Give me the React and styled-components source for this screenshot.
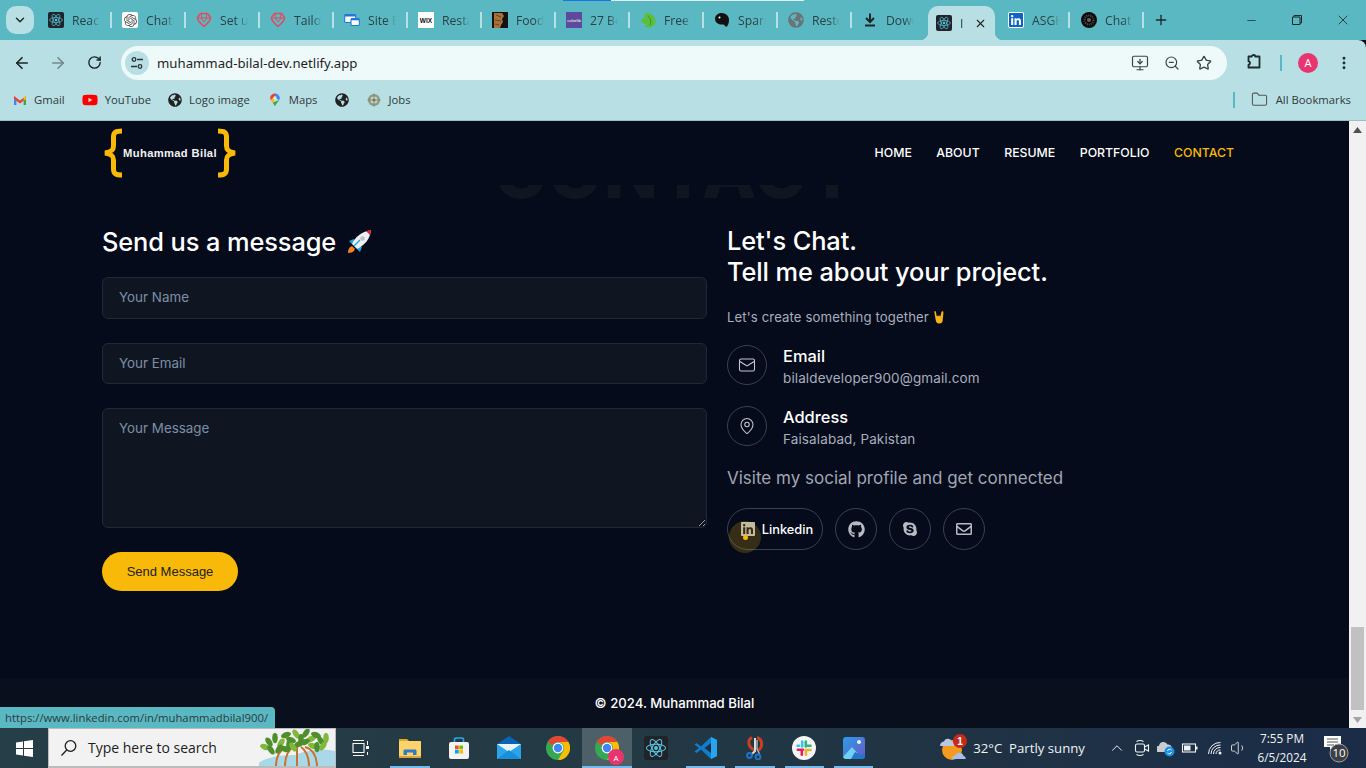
import React from "react";
import styled, { createGlobalStyle } from "styled-components";
import {
  ArrowLeft, ArrowRight, RotateCw, Star, ZoomOut, MonitorDown, MoreVertical, ChevronDown, ChevronUp,
  X, Plus, Minus, Folder, Mail, MapPin, Volume1,
} from "lucide-react";
import { FaLinkedin, FaGithub, FaSkype, FaRegEnvelope, FaYoutube, FaGlobeAmericas } from "react-icons/fa";
import { SiOpenai } from "react-icons/si";

const Global = createGlobalStyle`
  html, body { margin: 0; padding: 0; background: #050b1b; overflow: hidden; }
  * { box-sizing: border-box; }
`;

const uiFont = `"Open Sans", "Noto Sans", sans-serif`;
const webFont = `Inter, "Noto Sans", sans-serif`;

const Screen = styled.div`
  position: relative; width: 1366px; height: 768px; overflow: hidden;
  display: flex; flex-direction: column; font-family: ${uiFont};
`;

/* ---------- tab strip ---------- */
const TabStrip = styled.div`
  height: 40px; flex: none; background: #5ab8c2; display: flex; align-items: center; padding-left: 6px; position: relative;
`;
const LoadBar = styled.div`
  position: absolute; top: 0; left: 563px; width: 241px; height: 1px;
  background: linear-gradient(90deg, #1a73e8 0 20%, #dfeff1 20% 100%);
`;
const TabMenu = styled.div`
  width: 28px; height: 28px; border-radius: 10px; background: #b8e0e4; color: #1f2a2c;
  display: flex; align-items: center; justify-content: center; margin-right: 4px; flex: none;
`;
const Tab = styled.div`
  width: ${p => p.$w || 74}px; height: 40px; flex: none; display: flex; align-items: center; position: relative;
  padding-left: ${p => p.$pad || 10}px; gap: ${p => p.$gap || 8}px;
  &::after {
    content: ""; display: ${p => (p.$nosep ? "none" : "block")};
    position: absolute; right: 0; top: 12px; width: 2px; height: 16px; background: #b8e0e4;
  }
`;
const ActiveTab = styled.div`
  width: 67px; height: 34px; margin: 6px 2px 0 2px; flex: none; align-self: flex-start; background: #b8e0e4;
  border-radius: 10px 10px 0 0; display: flex; align-items: center; padding-left: 8px; gap: 8px; color: #222; position: relative;
  &::before, &::after { content: ""; position: absolute; bottom: 0; width: 8px; height: 8px; }
  &::before { left: -8px; background: radial-gradient(circle at 0 0, transparent 8px, #b8e0e4 8.5px); }
  &::after { right: -8px; background: radial-gradient(circle at 100% 0, transparent 8px, #b8e0e4 8.5px); }
`;
const TabLabel = styled.span`
  font-size: 12.2px; color: #2c3f44; width: ${p => p.$w || 28}px; overflow: hidden; white-space: nowrap; display: block;
  -webkit-mask-image: linear-gradient(90deg, #000 65%, transparent 100%);
  mask-image: linear-gradient(90deg, #000 65%, transparent 100%);
`;
const NewTab = styled.div`
  width: 30px; display: flex; justify-content: center; margin-left: 2px; color: #1d2a2c;
`;
const WindowControls = styled.div`
  margin-left: auto; display: flex; align-items: center; color: #1c2628; padding-right: 0;
`;
const WinBtn = styled.div`
  width: 46px; height: 40px; display: flex; align-items: center; justify-content: center;
`;

/* ---------- toolbar ---------- */
const Toolbar = styled.div`
  height: 45px; flex: none; background: #b8e0e4; display: flex; align-items: center; border-top-right-radius: 8px;
  padding: 0 0 0 4px;
`;
const NavIcon = styled.div`
  width: 36px; height: 34px; display: flex; align-items: center; justify-content: center;
  color: ${p => p.$muted ? "#76888c" : "#1a2426"}; flex: none;
`;
const Omnibox = styled.div`
  width: 1106px; height: 34px; margin-left: 9px; border-radius: 17px; background: #eef9f9; display: flex; align-items: center;
  padding: 0 7px 0 4px; flex: none;
`;
const SiteChip = styled.div`
  width: 24px; height: 24px; border-radius: 50%; background: #b8e0e4; display: flex; align-items: center; justify-content: center; flex: none;
`;
const Url = styled.span`
  margin-left: 8px; font-size: 13.2px; color: #1f1f1f; font-family: "Noto Sans", sans-serif; flex: 1;
`;
const OmniIcon = styled.div`
  width: 32px; display: flex; justify-content: center; color: #3a4447;
`;
const ToolbarEnd = styled.div`
  display: flex; align-items: center; margin-left: 11px; flex: 1;
`;
const ToolbarIcon = styled.div`
  width: ${p => p.$w || 32}px; display: flex; justify-content: center; color: #1f2a2c; flex: none;
`;
const VSep = styled.div`
  width: 2px; height: 16px; background: #5ab8c2; flex: none; margin: ${p => p.$m || "0"};
`;
const Avatar = styled.div`
  width: 20px; height: 20px; border-radius: 50%; background: #e8356f; color: #fff; font-size: 11px;
  display: flex; align-items: center; justify-content: center; flex: none;
`;

/* ---------- bookmarks ---------- */
const BookmarkBar = styled.div`
  height: 36px; flex: none; background: #b8e0e4; border-bottom: 1px solid #9dbfc3; display: flex; align-items: center; padding: 0 15px 6px 13px;
`;
const Bookmark = styled.div`
  display: flex; align-items: center; gap: 7px; font-size: 11.3px; color: #30383a; margin-right: ${p => p.$mr ?? 17}px; white-space: nowrap;
`;
const BookmarkEnd = styled.div`
  margin-left: auto; display: flex; align-items: center; gap: 8px; font-size: 11.3px; color: #30383a;
`;

/* ---------- web page ---------- */
const Viewport = styled.div`
  flex: 1; min-height: 0; display: flex;
`;
const Page = styled.main`
  flex: 1; min-width: 0; background: #050b1b; overflow: hidden; display: flex; flex-direction: column; font-family: ${webFont};
`;
const Header = styled.header`
  height: 64px; flex: none; background: #050b1b; position: relative; z-index: 2;
  display: flex; align-items: center; justify-content: space-between; padding: 0 115px 0 104px;
`;
const Logo = styled.div`
  display: flex; align-items: center;
`;
const LogoName = styled.span`
  color: #f2f2f2; font-weight: 700; font-size: 11.2px; font-family: "Liberation Sans", sans-serif; white-space: nowrap; letter-spacing: .35px; width: 94px; text-align: center;
`;
const Nav = styled.nav`
  display: flex; gap: 24.5px; padding-bottom: 2px;
`;
const NavLink = styled.a`
  font-size: 12.3px; font-weight: 500; color: ${p => p.$active ? "#f9b908" : "#fff"}; text-transform: uppercase; white-space: nowrap;
`;
const Title = styled.div`
  margin-top: -43px; margin-left: 2px; height: 61px; line-height: 61px; flex: none; text-align: center; font-weight: 800; font-size: 71px; color: #10161f;
  white-space: nowrap; letter-spacing: 1px; overflow: hidden;
`;
const Columns = styled.div`
  display: grid; grid-template-columns: 605px 1fr; gap: 20px; padding: 21px 0 0 102px; flex: 1;
`;
const FormCol = styled.form`
  display: flex; flex-direction: column; margin: 0;
`;
const Heading = styled.h2`
  margin: 0; font-size: 25.4px; font-weight: 500; color: #fff; line-height: 31px; display: flex; align-items: center; gap: 10px; white-space: nowrap; letter-spacing: -.1px;
`;
const FormHeading = styled(Heading)`
  margin: 2px 0 20px;
`;
const fieldCss = `
  width: 100%; background: #0f1622; border: 1px solid #222936; border-radius: 6px; color: #fff;
  font-family: ${webFont}; font-size: 13.4px; padding: 0 16px; outline: none; display: block;
  &::placeholder { color: #7d8ea6; opacity: 1; }
`;
const Field = styled.input`
  ${fieldCss}
  height: ${p => p.$h}px; margin-bottom: ${p => p.$mb}px; padding-bottom: 2px;
`;
const Area = styled.textarea`
  ${fieldCss}
  height: 120px; padding-top: 11px; margin-bottom: 24px; color-scheme: dark;
`;
const SendBtn = styled.button`
  width: 136px; height: 39px; border: 0; border-radius: 20px; background: #f9b908; color: #222;
  font-family: "Liberation Sans", sans-serif; font-size: 13px;
`;
const InfoCol = styled.div`
  display: flex; flex-direction: column; padding-top: 1px;
`;
const Sub = styled.p`
  margin: 22px 0 0; font-size: 13.2px; color: #a8aebb; line-height: 16px; display: flex; align-items: center; gap: 3px; letter-spacing: .1px;
`;
const InfoRow = styled.div`
  display: flex; align-items: flex-start; gap: 16px; height: 40px; margin-top: ${p => p.$mt}px;
`;
const Ring = styled.div`
  width: 40px; height: 40px; border-radius: 50%; border: 1px solid #3a404c; display: flex; align-items: center; justify-content: center; color: #c3c7cf; flex: none;
`;
const InfoText = styled.div`
  display: flex; flex-direction: column;
`;
const InfoTitle = styled.div`
  font-size: 16.4px; font-weight: 500; color: #fff; line-height: 22px;
`;
const InfoValue = styled.div`
  font-size: 13.5px; color: #a8aebb; line-height: 22px; letter-spacing: .12px;
`;
const Visit = styled.div`
  margin-top: 20px; font-size: 17px; color: #a0a6b2; line-height: 24px; white-space: nowrap;
`;
const Socials = styled.div`
  display: flex; gap: 12px; margin-top: 18px; position: relative;
`;
const SocialPill = styled.a`
  height: 42px; width: ${p => p.$wide ? 96 : 42}px; border-radius: 21px; border: 1px solid #3a404c; display: flex; align-items: center; justify-content: center;
  gap: 6px; color: #b7bbc3; font-size: 12.8px; font-weight: 500; padding-left: ${p => p.$wide ? 3 : 0}px;
`;
const SocialText = styled.span`
  color: #fff;
`;
const Pointer = styled.div`
  position: absolute; left: 2px; top: 13px; width: 32px; height: 32px; border-radius: 50%;
  background: rgba(249,185,8,.2); display: flex; align-items: center; justify-content: center;
  &::after { content: ""; width: 5px; height: 5px; border-radius: 50%; background: #f9b908; }
`;
const Footer = styled.footer`
  height: 50px; flex: none; background: #0a0f1e; color: #fff; font-size: 13.2px; font-weight: 500;
  display: flex; align-items: center; justify-content: center;
`;
const Scrollbar = styled.div`
  width: 17px; flex: none; background: #f1f1f1; display: flex; flex-direction: column; align-items: center;
`;
const ScrollTrack = styled.div`
  flex: 1; width: 100%; padding: 0 2px 1px; display: flex; flex-direction: column; justify-content: flex-end;
`;
const ScrollThumb = styled.div`
  height: 83px; background: #c1c1c1;
`;
const Arrow = styled.div`
  height: 17px; width: 100%; flex: none; display: flex; align-items: center; justify-content: center;
`;
const StatusBubble = styled.div`
  position: absolute; left: 0; bottom: 40px; height: 21px; width: 275px; background: #5ab8c2; color: #2d3a3d;
  font-size: 11.3px; display: flex; align-items: center; padding-left: 5px; border-top-right-radius: 4px; white-space: nowrap;
`;

/* ---------- taskbar ---------- */
const Taskbar = styled.div`
  height: 40px; flex: none; display: flex; align-items: center; color: #f0f3f4;
  background: linear-gradient(90deg, #263e47 0%, #233943 45%, #1b2c47 100%);
`;
const StartBtn = styled.div`
  width: 48px; height: 40px; display: flex; align-items: center; justify-content: center; flex: none;
`;
const SearchBox = styled.div`
  width: 288px; height: 40px; background: #f2f2f2; border: 1px solid #bcbcbc; border-bottom-width: 2px; display: flex; align-items: center; padding-left: 11px;
  color: #1d1d1d; flex: none; overflow: hidden;
`;
const SearchText = styled.span`
  font-size: 14px; margin-left: 10px; flex: 1; white-space: nowrap;
`;
const TaskBtn = styled.div`
  width: 49.3px; height: 40px; flex: none; display: flex; align-items: center; justify-content: center; position: relative;
  background: ${p => p.$active ? "#4d6067" : "transparent"};
  &::after {
    content: ""; position: absolute; bottom: 0; height: 2px; background: #76b9ed;
    left: ${p => p.$active ? 0 : 5}px; right: ${p => p.$active ? 0 : 5}px; display: ${p => p.$run ? "block" : "none"};
  }
`;
const Weather = styled.div`
  margin-left: auto; display: flex; align-items: center; font-size: 13.2px; gap: 4px; width: 168px; flex: none; padding-left: 2px;
`;
const WeatherText = styled.span`
  white-space: nowrap;
`;
const TraySlot = styled.div`
  width: 24.3px; flex: none; display: flex; justify-content: center; align-items: center;
`;
const Clock = styled.div`
  width: 62px; flex: none; font-size: 11.8px; line-height: 19px; text-align: center;
`;
const Notify = styled.div`
  width: 53px; flex: none; display: flex; justify-content: flex-start; padding-left: 11px;
`;

/* ---------- drawn icons ---------- */
const S = ({ s = 16, v = "0 0 16 16", children, ...r }) => (
  <svg width={s} height={s} viewBox={v} style={{ flex: "none", display: "block" }} {...r}>{children}</svg>
);
const ReactLogo = ({ s = 16, bg = "#20232a" }) => (
  <S s={s}>
    <rect width="16" height="16" rx="2" fill={bg} />
    <g fill="none" stroke="#58c4dc" strokeWidth=".7">
      <ellipse cx="8" cy="8" rx="6.4" ry="2.5" />
      <ellipse cx="8" cy="8" rx="6.4" ry="2.5" transform="rotate(60 8 8)" />
      <ellipse cx="8" cy="8" rx="6.4" ry="2.5" transform="rotate(120 8 8)" />
    </g>
    <circle cx="8" cy="8" r="1.3" fill="#58c4dc" />
  </S>
);
const IconTile = styled.div`
  width: 16px; height: 16px; background: #fff; border-radius: 2px; display: flex; align-items: center; justify-content: center; flex: none;
`;
const GptIcon = () => (
  <IconTile><SiOpenai size={13} color="#555" /></IconTile>
);
const ShieldIcon = () => (
  <S>
    <path d="M4.5 1.5h7l3 4c.3 3-3.5 6.5-6.5 9-3-2.5-6.8-6-6.5-9z" fill="none" stroke="#e5485d" strokeWidth="1.4" strokeLinejoin="round" />
    <path d="M2 6h12M5 6l3 4 3-4M5 2l1 4M11 2l-1 4" fill="none" stroke="#e5485d" strokeWidth="1" />
  </S>
);
const SiteIcon = () => (
  <S>
    <rect x="0.7" y="2.5" width="11" height="8" rx="1" fill="#fff" stroke="#1f78d6" strokeWidth="1.1" />
    <rect x="0.7" y="2.5" width="11" height="2" fill="#1f78d6" />
    <rect x="7" y="6.5" width="8.3" height="7" rx="1" fill="#fff" stroke="#1f78d6" strokeWidth="1.1" />
    <rect x="7" y="6.5" width="8.3" height="1.8" fill="#1f78d6" />
  </S>
);
const WixIcon = () => (
  <S>
    <rect width="16" height="16" fill="#fff" />
    <text x="8" y="10.5" textAnchor="middle" fontSize="6.5" fontWeight="700" fontFamily="Liberation Sans" fill="#111">WIX</text>
  </S>
);
const FoodIcon = () => (
  <S>
    <rect width="16" height="16" fill="#15120f" />
    <path d="M2 1h8l2 3-2 3 1 3-2 3-1 3H2z" fill="#a8713a" />
    <path d="M4 3l5 2M3 8l6 1M3 12l4 1" stroke="#5e3b1c" strokeWidth=".8" />
  </S>
);
const ColorlibIcon = () => (
  <S>
    <rect width="16" height="16" fill="#5d4a9c" />
    <text x="8" y="9.8" textAnchor="middle" fontSize="4.3" fontFamily="Liberation Sans" fill="#fff">colorlib</text>
  </S>
);
const LeafIcon = () => (
  <S>
    <path d="M6 .5c5 .5 9.5 4 9.5 8.5 0 4-3 6.5-6.5 6.5-1.5 0-3-.5-4.5-1.5L7 12.5C4 12 1.5 10.5 .8 8 2 6.8 3.5 6.3 5 6.5 4 4.5 4.5 2.5 6 .5z" fill="#5cbf3b" />
    <path d="M8 4c2.5 2 3.5 5.5 2 9" stroke="#3d9228" fill="none" />
  </S>
);
const SparkIcon = () => (
  <S>
    <path d="M7.5 1C12 1 15 4 15 8c0 3-1 6-3 7-1-1-1.5-2-2.5-2.5C5 13 1 11 1 6.5 1 3.5 4 1 7.5 1z" fill="#111" />
    <circle cx="5.5" cy="5.5" r="1" fill="#fff" />
  </S>
);
const DownloadIcon = () => (
  <S>
    <path d="M8 1.5v8M4 6l4 4 4-4" fill="none" stroke="#1c2628" strokeWidth="2" />
    <path d="M3 13.5h10" stroke="#1c2628" strokeWidth="2" />
  </S>
);
const DotBall = () => (
  <S>
    <circle cx="8" cy="8" r="8" fill="#0a0a0a" />
    <circle cx="8" cy="8" r="4.5" fill="none" stroke="#555" strokeWidth="2" strokeDasharray="1 1" />
    <circle cx="8" cy="8" r="2" fill="#666" />
  </S>
);
const TuneIcon = () => (
  <S s={14} v="0 0 14 14">
    <g fill="none" stroke="#2a3436" strokeWidth="1.3">
      <circle cx="4" cy="3.5" r="1.8" />
      <path d="M7 3.5h6M1 10.5h6" />
      <circle cx="10" cy="10.5" r="1.8" />
    </g>
  </S>
);
const PuzzleIcon = () => (
  <S s={18} v="0 0 18 18">
    <path d="M3.5 2.5h3.3c0-2 3.4-2 3.4 0h4.3v11h-11v-2.8c2 0 2-3.4 0-3.4z" fill="none" stroke="#1f2a2c" strokeWidth="1.8" strokeLinejoin="round" />
  </S>
);
const RestoreIcon = () => (
  <S s={12} v="0 0 12 12">
    <path d="M3 3V1.5h7.5V9H9M1.5 3h7.5v7.5H1.5z" fill="none" stroke="#1c2628" strokeWidth="1" />
  </S>
);
const GmailIcon = () => (
  <S s={14} v="0 0 14 14">
    <path d="M1 3v9h2.4V6z" fill="#4285f4" />
    <path d="M13 3v9h-2.4V6z" fill="#34a853" />
    <path d="M1 3l6 4.5L13 3v-.5 3.5L7 10.5 1 6z" fill="#ea4335" />
    <path d="M10.6 4.8L13 3v3l-2.4 1.8z" fill="#fbbc04" />
  </S>
);
const MapsPin = () => (
  <S s={14} v="0 0 14 16">
    <path d="M7 .5C3.8.5 1.5 3 1.5 5.7c0 1 .3 1.8.7 2.5L7 3.8z" fill="#ea4335" />
    <path d="M7 .5c1.6 0 3 .6 4 1.7L7 6z" fill="#4285f4" />
    <path d="M11 2.2c1 1 1.5 2.2 1.5 3.5 0 .8-.2 1.6-.6 2.3L7 6z" fill="#4285f4" />
    <path d="M2.2 8.2L7 3.8v4.6L4.2 11z" fill="#fbbc04" />
    <path d="M4.2 11l7.7-3C10.5 10.5 8 12 7 15.5 6.5 13.5 5.3 12.3 4.2 11z" fill="#34a853" />
    <circle cx="7" cy="5.7" r="1.9" fill="#fff" opacity=".75" />
  </S>
);
const JobsIcon = () => (
  <S s={14}>
    <circle cx="8" cy="8" r="7" fill="#8f9c87" />
    <circle cx="8" cy="8" r="4" fill="#cdd6c4" />
    <path d="M8 .5v15M.5 8h15" stroke="#75816d" strokeWidth=".9" />
    <circle cx="8" cy="8" r="1.8" fill="#6d7a66" />
  </S>
);
const BraceSvg = ({ flip }) => (
  <S s={50} v="0 0 19 50" width="19" height="50" style={{ transform: flip ? "scaleX(-1)" : "none", flex: "none" }}>
    <path d="M18 3C12 3 9.5 4 9.5 9V18C9.5 22 7.5 24 1 25C7.5 26 9.5 28 9.5 32V41C9.5 46 12 47 18 47"
      fill="none" stroke="#f9b908" strokeWidth="5" strokeLinecap="butt" strokeLinejoin="miter" />
  </S>
);
const Rocket = () => (
  <S s={26} v="0 0 26 26">
    <path d="M2 24c0-3 1-6 4-7l3 3c-1 3-4 4-7 4z" fill="#f5811f" />
    <path d="M8 10l-5 2 3 3 3-2zM16 18l-2 5-3-3 2-3z" fill="#1fa2dc" />
    <path d="M6 15C9 8 15 3 25 1c-1 9-6 15-14 19z" fill="#eef1f4" />
    <path d="M20 1.9L25 1c-.2 2-.5 3.5-1 5z" fill="#d8222c" />
    <circle cx="16.5" cy="9.5" r="2.3" fill="#b9c0c6" />
    <path d="M8 17l6-6" stroke="#1fa2dc" strokeWidth="1.2" />
  </S>
);
const RockHand = () => (
  <S s={14} v="0 0 12 14">
    <path d="M2 1c1 0 1 1 1.3 3l.3 2h4l.6-3C8.4 1.5 9 1 9.8 1.3c.7.3.7 1.4.5 3L9.8 9c0 3-1 4.5-3.5 4.5S3 12 2.6 9.5L1.5 3C1.3 2 1.4 1 2 1z" fill="#f6b21b" />
    <path d="M4 6h3.8" stroke="#b87d0c" strokeWidth=".8" />
  </S>
);
const WinLogo = () => (
  <S s={17} v="0 0 17 17">
    <path d="M0 2.4l7-1v6.6H0zM8 1.3L17 0v8H8zM0 9h7v6.6l-7-1zM8 9h9v8l-9-1.3z" fill="#fff" />
  </S>
);
const SearchGlass = () => (
  <S s={18} v="0 0 18 18">
    <circle cx="10.5" cy="7" r="5.3" fill="none" stroke="#1d1d1d" strokeWidth="1.3" />
    <path d="M6.7 11L1.5 16.5" stroke="#1d1d1d" strokeWidth="1.3" />
  </S>
);
const leaves = [[6,18],[10,13],[16,9],[22,14],[27,6],[32,11],[37,5],[42,10],[47,4],[52,10],[57,6],[62,12],[67,9],[20,20],[40,15],[54,17],[12,21],[30,16],[64,17],[46,13],[26,20],[34,18],[58,18]];
const Mangrove = () => (
  <S s={76} v="0 0 76 38" width="76" height="38" style={{ flex: "none", display: "block" }}>
    <path d="M-4 38a40 14 0 0 1 40-12c14-6 30-6 40-4v16z" fill="#a9d8e8" />
    <g fill="none" stroke="#c9702a" strokeWidth="2">
      <path d="M30 18C20 20 17 28 17 38M34 18c-6 4-8 12-8 20M38 18v20M42 18c6 4 8 12 8 20M46 18c8 2 12 10 12 20" />
    </g>
    <g>
      {leaves.map(([x, y], i) => (
        <ellipse key={i} cx={x} cy={y} rx="2.8" ry="5.2" transform={`rotate(${(i % 5) * 35 - 70} ${x} ${y})`} fill={i % 3 === 0 ? "#80b83e" : "#4e8e2b"} />
      ))}
    </g>
  </S>
);
const TaskView = () => (
  <S s={18} v="0 0 18 18">
    <path d="M1 1.5h11M1 16.5h11M1 4.5h11v9H1z" fill="none" stroke="#fff" strokeWidth="1.1" />
    <path d="M15.5 2v4M15.5 13v3" stroke="#fff" strokeWidth="1" fill="none" />
    <rect x="14" y="7" width="3" height="3" fill="#fff" />
  </S>
);
const FolderIcon = () => (
  <S s={24} v="0 0 24 24">
    <path d="M1 3h8l2 2h12v3H1z" fill="#e3a72b" />
    <rect x="1" y="5" width="22" height="17" rx="1" fill="#fbd36a" />
    <path d="M5.5 19v-4c0-1 .5-1.5 1.5-1.5h10c1 0 1.5.5 1.5 1.5v4h-3.5v-2.5H9V19z" fill="#2f7bc7" />
    <rect x="1" y="20" width="22" height="2" fill="#d9a23a" />
  </S>
);
const StoreIcon = () => (
  <S s={24} v="0 0 24 24">
    <path d="M7.5 6V3.5c0-1 1-1.5 2-1.5h5c1 0 2 .5 2 1.5V6" fill="none" stroke="#2aa8e6" strokeWidth="1.6" />
    <rect x="2" y="6" width="20" height="17" rx="2" fill="#f3f3f3" />
    <rect x="8" y="9.5" width="3.7" height="3.7" fill="#f25022" />
    <rect x="12.3" y="9.5" width="3.7" height="3.7" fill="#7fba00" />
    <rect x="8" y="13.8" width="3.7" height="3.7" fill="#00a4ef" />
    <rect x="12.3" y="13.8" width="3.7" height="3.7" fill="#ffb900" />
  </S>
);
const MailIcon = () => (
  <S s={26} v="0 0 26 26">
    <path d="M13 1L1 9v14h24V9z" fill="#0a63b4" />
    <path d="M1 9h24v15H1z" fill="#2aa4ea" />
    <path d="M1 9l12 8 12-8z" fill="#e8f3fb" />
    <path d="M1 24l12-9 12 9z" fill="#1a8fd9" />
  </S>
);
const Chrome = ({ s = 24 }) => (
  <S s={s} v="0 0 24 24">
    <circle cx="12" cy="12" r="12" fill="#34a853" />
    <path d="M12 0a12 12 0 0 1 10.4 6H12a6 6 0 0 0-5.2 3L1.6 6A12 12 0 0 1 12 0z" fill="#ea4335" />
    <path d="M22.4 6A12 12 0 0 1 12 24l5.2-9A6 6 0 0 0 12 6z" fill="#fbbc04" />
    <circle cx="12" cy="12" r="5.4" fill="#fff" />
    <circle cx="12" cy="12" r="4.2" fill="#4285f4" />
  </S>
);
const ChromeWrap = styled.div`
  position: relative; width: 24px; height: 24px;
`;
const ChromeBadge = styled.div`
  position: absolute; right: -5px; bottom: -5px; width: 16px; height: 16px; border-radius: 50%; background: #e8356f; color: #fff; font-size: 8px;
  display: flex; align-items: center; justify-content: center;
`;
const VsCode = () => (
  <S s={24} v="0 0 24 24">
    <path d="M17 1l6 3v16l-6 3L7 13.5 2.5 17 .5 15.5 5 12 .5 8.5 2.5 7 7 10.5z" fill="#0e7fcf" />
    <path d="M17 1l6 3v16l-6 3z" fill="#27a5ef" />
    <path d="M17 7v10l-6.5-5z" fill="#23282f" opacity=".9" />
  </S>
);
const SnipIcon = () => (
  <S s={24} v="0 0 24 24">
    <path d="M9 1.5C4 4 5 11 11 14" fill="none" stroke="#c8401f" strokeWidth="3" />
    <path d="M14 1.5c6 2 6 10 1 13" fill="none" stroke="#c8401f" strokeWidth="3" />
    <path d="M12 2v13l-3 3" stroke="#d9dcdf" strokeWidth="2" fill="none" />
    <path d="M14 4v9l2.5 5" stroke="#a9aeb3" strokeWidth="1.5" fill="none" />
    <circle cx="6.5" cy="19.5" r="2.4" fill="none" stroke="#1f72c9" strokeWidth="2" />
    <circle cx="15" cy="21" r="2.4" fill="none" stroke="#1f72c9" strokeWidth="2" />
  </S>
);
const SlackIcon = () => (
  <S s={24} v="0 0 24 24">
    <circle cx="12" cy="12" r="12" fill="#f5f5f5" />
    <g strokeWidth="2.6" strokeLinecap="round" fill="none">
      <path d="M5.8 13.8h5" stroke="#e01e5a" />
      <path d="M9.8 15.5v3.3" stroke="#e01e5a" />
      <path d="M10.2 5.5v5" stroke="#36c5f0" />
      <path d="M5.5 9.8h1.5" stroke="#36c5f0" />
      <path d="M13.8 5.5v5" stroke="#2eb67d" />
      <path d="M15.5 9.8h3" stroke="#2eb67d" />
      <path d="M13.5 14h5" stroke="#ecb22e" />
      <path d="M14 15.8v3" stroke="#ecb22e" />
    </g>
  </S>
);
const PhotosIcon = () => (
  <S s={24} v="0 0 24 24">
    <defs>
      <linearGradient id="pg" x1="0" y1="0" x2="1" y2="1">
        <stop offset="0" stopColor="#2a9ee8" /><stop offset="1" stopColor="#6c56c6" />
      </linearGradient>
    </defs>
    <rect x="1" y="1" width="22" height="22" rx="3" fill="url(#pg)" />
    <circle cx="17" cy="6" r="2" fill="#e8f4fb" />
    <path d="M1 21l9-10 7 8 2 4H3z" fill="#6fd0f3" />
    <path d="M9 23l4-7 6 3 4-2v3a3 3 0 0 1-3 3z" fill="#2376c9" />
  </S>
);
const WeatherIcon = () => (
  <S s={30} v="0 0 30 30">
    <circle cx="13" cy="17" r="10" fill="#f39a1f" />
    <path d="M1 13c0-3 2-4.5 4-4.5C6 6 8 5.5 10 6c2 .5 3 2 3 3 2 .5 2.5 2 2 4z" fill="#b7c7e4" />
    <path d="M13 26c0-3 2-4 3.5-4 1-2 3-2.5 5-2 2 .5 3 2 3 3 2 .5 2.5 2 2 3z" fill="#a9bfe6" />
    <circle cx="21" cy="8" r="7" fill="#c42b1c" />
    <text x="21" y="11.5" textAnchor="middle" fontSize="10" fontFamily="Liberation Sans" fontWeight="700" fill="#fff">1</text>
  </S>
);
const MeetIcon = () => (
  <S s={18} v="0 0 18 18">
    <g fill="none" stroke="#f0f3f4" strokeWidth="1.1">
      <rect x="2.5" y="5" width="9" height="8" rx="1.5" />
      <path d="M11.5 8l4-2v6l-4-2M3.5 2.5c2-1.2 5-1.2 7 0M3.5 15.5c2 1.2 5 1.2 7 0" />
    </g>
  </S>
);
const OneDrive = () => (
  <S s={18} v="0 0 18 18">
    <path d="M1 13a3 3 0 0 1 1-6 4.5 4.5 0 0 1 8.5-1.5A4 4 0 0 1 15 9v4z" fill="#c9cdd2" />
    <circle cx="12.5" cy="12.5" r="5" fill="#1a8fe0" />
    <path d="M10.5 12a2.3 2.3 0 0 1 4-1M14.5 13a2.3 2.3 0 0 1-4 1" fill="none" stroke="#fff" strokeWidth="1" />
  </S>
);
const Battery = () => (
  <S s={18} v="0 0 18 18">
    <rect x="1.5" y="5" width="13" height="8" fill="none" stroke="#f0f3f4" strokeWidth="1.1" />
    <rect x="3" y="6.5" width="6.5" height="5" fill="#f0f3f4" />
    <rect x="15" y="7.5" width="1.5" height="3" fill="#f0f3f4" />
  </S>
);
const Wifi = () => (
  <S s={18} v="0 0 18 18">
    <g fill="none" stroke="#f0f3f4" strokeWidth="1">
      <path d="M2.5 15a11.5 11.5 0 0 1 12-11.5" />
      <path d="M5 15a9 9 0 0 1 9.5-9" />
      <path d="M7.5 15a6.5 6.5 0 0 1 7-6.5" />
      <path d="M10 15a4 4 0 0 1 4.5-4" />
    </g>
    <circle cx="14" cy="14" r="1.5" fill="#f0f3f4" />
  </S>
);
const NotifyIcon = () => (
  <S s={32} v="0 0 32 30" width="32" height="30">
    <path d="M0 3h17v11h-8l-3 3v-3H0z" fill="#fff" />
    <path d="M3 6h11M3 9h11M3 12h7" stroke="#555" strokeWidth="1" />
    <circle cx="15" cy="20" r="9" fill="#3c3f43" stroke="#9fa3a7" strokeWidth="1" />
    <text x="15" y="24" textAnchor="middle" fontSize="11.5" fontFamily="Open Sans" fill="#fff">10</text>
  </S>
);
const ArrowUp = ({ down }) => (
  <S s={9} v="0 0 9 6" width="9" height="6" style={{ transform: down ? "rotate(180deg)" : "none" }}>
    <path d="M4.5 0L9 6H0z" fill={down ? "#a3a3a3" : "#505050"} />
  </S>
);

const tabs = [
  { icon: <ReactLogo />, label: "React" },
  { icon: <GptIcon />, label: "ChatGPT" },
  { icon: <ShieldIcon />, label: "Set up" },
  { icon: <ShieldIcon />, label: "Tailor" },
  { icon: <SiteIcon />, label: "Site B" },
  { icon: <WixIcon />, label: "Resta" },
  { icon: <FoodIcon />, label: "Food" },
  { icon: <ColorlibIcon />, label: "27 Be" },
  { icon: <LeafIcon />, label: "Free" },
  { icon: <SparkIcon />, label: "Sparr" },
  { icon: <FaGlobeAmericas size={16} color="#6b7376" />, label: "Resto" },
  { icon: <DownloadIcon />, label: "Down", nosep: true },
];

export default function App() {
  return (
    <Screen>
      <Global />
      <TabStrip>
        <LoadBar />
        <TabMenu><ChevronDown size={14} strokeWidth={2.5} /></TabMenu>
        {tabs.map(t => (
          <Tab key={t.label} $nosep={t.nosep}>{t.icon}<TabLabel>{t.label}</TabLabel></Tab>
        ))}
        <ActiveTab>
          <ReactLogo />
          <TabLabel $w={6}>I</TabLabel>
          <X size={13} strokeWidth={2} />
        </ActiveTab>
        <Tab $w={73} $pad={11}><FaLinkedin size={16} color="#0a66c2" style={{ background: "#fff", borderRadius: 2 }} /><TabLabel>ASGH</TabLabel></Tab>
        <Tab $w={74} $pad={11}><DotBall /><TabLabel>Chat</TabLabel></Tab>
        <NewTab><Plus size={16} strokeWidth={2} /></NewTab>
        <WindowControls>
          <WinBtn><Minus size={13} strokeWidth={1.3} /></WinBtn>
          <WinBtn><RestoreIcon /></WinBtn>
          <WinBtn><X size={16} strokeWidth={1.2} /></WinBtn>
        </WindowControls>
      </TabStrip>

      <Toolbar>
        <NavIcon><ArrowLeft size={18} strokeWidth={2.2} /></NavIcon>
        <NavIcon $muted><ArrowRight size={18} strokeWidth={2.2} /></NavIcon>
        <NavIcon><RotateCw size={15} strokeWidth={2.2} /></NavIcon>
        <Omnibox>
          <SiteChip><TuneIcon /></SiteChip>
          <Url>muhammad-bilal-dev.netlify.app</Url>
          <OmniIcon><MonitorDown size={18} strokeWidth={1.6} /></OmniIcon>
          <OmniIcon><ZoomOut size={16} strokeWidth={1.8} /></OmniIcon>
          <OmniIcon><Star size={16} strokeWidth={2} /></OmniIcon>
        </Omnibox>
        <ToolbarEnd>
          <ToolbarIcon $w={32}><PuzzleIcon /></ToolbarIcon>
          <VSep $m="0 16px 0 10px" />
          <Avatar>A</Avatar>
          <ToolbarIcon $w={32} style={{ marginLeft: 10 }}><MoreVertical size={16} strokeWidth={2.4} /></ToolbarIcon>
        </ToolbarEnd>
      </Toolbar>

      <BookmarkBar>
        <Bookmark><GmailIcon />Gmail</Bookmark>
        <Bookmark><FaYoutube size={16} color="#f00" style={{ flex: "none" }} />YouTube</Bookmark>
        <Bookmark $mr={18}><FaGlobeAmericas size={14} color="#222" />Logo image</Bookmark>
        <Bookmark $mr={18}><MapsPin />Maps</Bookmark>
        <Bookmark $mr={18}><FaGlobeAmericas size={14} color="#222" /></Bookmark>
        <Bookmark><JobsIcon />Jobs</Bookmark>
        <BookmarkEnd>
          <VSep $m="0 8px 0 0" />
          <Folder size={17} strokeWidth={1.5} color="#555" />
          <span>All Bookmarks</span>
        </BookmarkEnd>
      </BookmarkBar>

      <Viewport>
        <Page>
          <Header>
            <Logo>
              <BraceSvg />
              <LogoName>Muhammad Bilal</LogoName>
              <BraceSvg flip />
            </Logo>
            <Nav>
              <NavLink>Home</NavLink>
              <NavLink>About</NavLink>
              <NavLink>Resume</NavLink>
              <NavLink>Portfolio</NavLink>
              <NavLink $active>Contact</NavLink>
            </Nav>
          </Header>
          <Title>CONTACT</Title>
          <Columns>
            <FormCol onSubmit={e => e.preventDefault()}>
              <FormHeading>Send us a message <Rocket /></FormHeading>
              <Field placeholder="Your Name" $h={42} $mb={24} />
              <Field placeholder="Your Email" $h={41} $mb={24} />
              <Area placeholder="Your Message" />
              <SendBtn>Send Message</SendBtn>
            </FormCol>
            <InfoCol>
              <Heading as="h2">Let's Chat.</Heading>
              <Heading as="div">Tell me about your project.</Heading>
              <Sub>Let's create something together <RockHand /></Sub>
              <InfoRow $mt={20}>
                <Ring><Mail size={18} strokeWidth={1.4} /></Ring>
                <InfoText>
                  <InfoTitle>Email</InfoTitle>
                  <InfoValue>bilaldeveloper900@gmail.com</InfoValue>
                </InfoText>
              </InfoRow>
              <InfoRow $mt={21}>
                <Ring><MapPin size={18} strokeWidth={1.4} /></Ring>
                <InfoText>
                  <InfoTitle>Address</InfoTitle>
                  <InfoValue>Faisalabad, Pakistan</InfoValue>
                </InfoText>
              </InfoRow>
              <Visit>Visite my social profile and get connected</Visit>
              <Socials>
                <SocialPill $wide><FaLinkedin size={16} /><SocialText>Linkedin</SocialText></SocialPill>
                <SocialPill><FaGithub size={17} /></SocialPill>
                <SocialPill><FaSkype size={16} /></SocialPill>
                <SocialPill><FaRegEnvelope size={16} /></SocialPill>
                <Pointer />
              </Socials>
            </InfoCol>
          </Columns>
          <Footer>© 2024. Muhammad Bilal</Footer>
        </Page>
        <Scrollbar>
          <Arrow><ArrowUp /></Arrow>
          <ScrollTrack><ScrollThumb /></ScrollTrack>
          <Arrow><ArrowUp down /></Arrow>
        </Scrollbar>
      </Viewport>

      <StatusBubble>https://www.linkedin.com/in/muhammadbilal900/</StatusBubble>

      <Taskbar>
        <StartBtn><WinLogo /></StartBtn>
        <SearchBox>
          <SearchGlass />
          <SearchText>Type here to search</SearchText>
          <Mangrove />
        </SearchBox>
        <TaskBtn><TaskView /></TaskBtn>
        <TaskBtn $run><FolderIcon /></TaskBtn>
        <TaskBtn><StoreIcon /></TaskBtn>
        <TaskBtn><MailIcon /></TaskBtn>
        <TaskBtn><Chrome /></TaskBtn>
        <TaskBtn $run $active>
          <ChromeWrap><Chrome /><ChromeBadge>A</ChromeBadge></ChromeWrap>
        </TaskBtn>
        <TaskBtn><ReactLogo s={24} /></TaskBtn>
        <TaskBtn $run><VsCode /></TaskBtn>
        <TaskBtn $run><SnipIcon /></TaskBtn>
        <TaskBtn $run><SlackIcon /></TaskBtn>
        <TaskBtn $run><PhotosIcon /></TaskBtn>
        <Weather>
          <WeatherIcon />
          <WeatherText>32°C &nbsp;Partly sunny</WeatherText>
        </Weather>
        <TraySlot><ChevronUp size={18} strokeWidth={1.3} /></TraySlot>
        <TraySlot><MeetIcon /></TraySlot>
        <TraySlot><OneDrive /></TraySlot>
        <TraySlot><Battery /></TraySlot>
        <TraySlot><Wifi /></TraySlot>
        <TraySlot><Volume1 size={18} strokeWidth={1.1} /></TraySlot>
        <Clock>7:55 PM<br />6/5/2024</Clock>
        <Notify><NotifyIcon /></Notify>
      </Taskbar>
    </Screen>
  );
}
